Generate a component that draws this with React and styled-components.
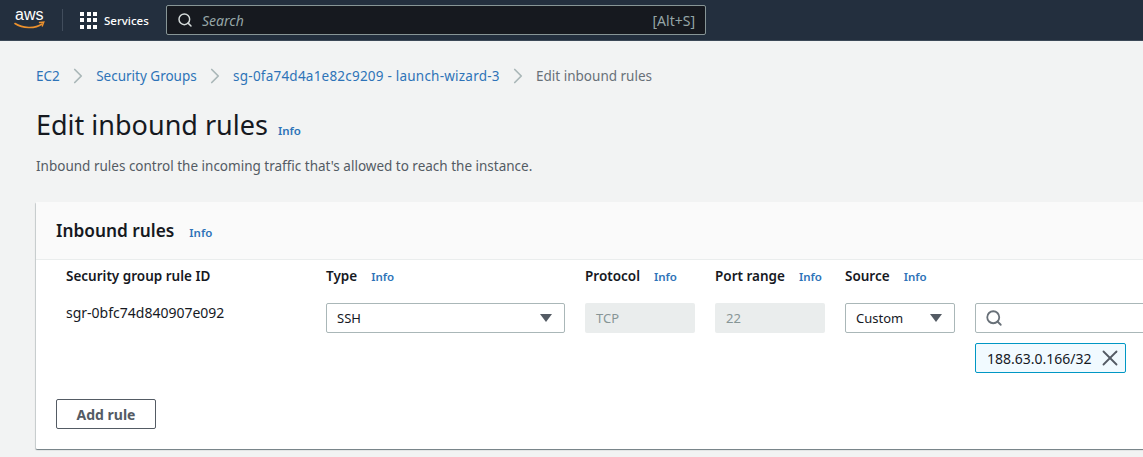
import React from "react";
import styled, { createGlobalStyle } from "styled-components";
import { Search, X, ChevronRight } from "lucide-react";

const GlobalStyle = createGlobalStyle`
  html, body {
    margin: 0;
    height: 100%;
    overflow: hidden;
    background: #f2f3f3;
    font-family: "Noto Sans", "Open Sans", sans-serif;
    font-size: 14px;
    color: #16191f;
  }
  * { box-sizing: border-box; }
`;

const Nav = styled.header`
  display: flex;
  align-items: center;
  height: 41px;
  padding-left: 14px;
  background: #232f3e;
  border-bottom: 1px solid #3c4857;
`;

const Logo = styled.svg`
  width: 32px;
  height: 30px;
  flex: none;
`;

const LogoText = styled.text`
  font-family: "Liberation Sans", sans-serif;
  font-size: 16px;
  fill: #fff;
`;

const NavDivider = styled.span`
  width: 1px;
  height: 22px;
  margin: 0 17px 0 16px;
  background: #414d5c;
`;

const ServicesButton = styled.div`
  display: flex;
  align-items: center;
  gap: 7px;
  width: 70px;
  margin-right: 16px;
  font-size: 11.5px;
  font-weight: 500;
  white-space: nowrap;
  color: #fff;
`;

const Waffle = styled.div`
  display: grid;
  grid-template-columns: repeat(3, 4px);
  grid-auto-rows: 4px;
  gap: 2.5px;
  flex: none;
`;

const WaffleDot = styled.span`
  background: #fff;
`;

const SearchBox = styled.div`
  display: flex;
  align-items: center;
  flex: none;
  width: 540px;
  height: 30px;
  padding: 0 10px;
  background: #16191f;
  border: 1px solid #879596;
  border-radius: 2px;
  color: #d5dbdb;
`;

const SearchPlaceholder = styled.span`
  flex: 1;
  margin-left: 9px;
  font-size: 14px;
  font-style: italic;
  color: #95a5a6;
`;

const Shortcut = styled.span`
  font-size: 14px;
  color: #95a5a6;
`;

const Page = styled.main`
  padding: 24px 0 0 36px;
`;

const Breadcrumbs = styled.nav`
  display: flex;
  align-items: center;
  height: 22px;
  font-size: 13.5px;
`;

const Crumb = styled.span`
  letter-spacing: ${(p) => (p.$id ? "0.22px" : "0")};
  color: ${(p) => (p.$current ? "#687078" : "#2e73b8")};
`;

const CrumbSep = styled(ChevronRight)`
  width: 26px;
  height: 26px;
  margin: 0 5.2px;
  color: #aab7b8;
`;

const TitleRow = styled.div`
  display: flex;
  align-items: baseline;
  margin-top: 19px;
`;

const Title = styled.h1`
  margin: 0;
  font-size: 27px;
  line-height: 38px;
  font-weight: 400;
  color: #16191f;
`;

const InfoLink = styled.a`
  margin-left: ${(p) => p.$gap || 10}px;
  font-size: 11.5px;
  font-weight: 600;
  color: #2e73b8;
`;

const Description = styled.p`
  margin: 13px 0 0;
  font-size: 13.5px;
  line-height: 18px;
  color: #545b64;
`;

const Card = styled.section`
  width: 1200px;
  height: 247px;
  margin-top: 27px;
  background: #fff;
  border-radius: 1px;
  box-shadow: 0 1px 1px 0 rgba(0, 28, 36, 0.4), 1px 1px 1px 0 rgba(0, 28, 36, 0.1),
    -1px 1px 1px 0 rgba(0, 28, 36, 0.15);
`;

const CardHeader = styled.div`
  display: flex;
  align-items: baseline;
  height: 58px;
  padding: 15px 20px 0;
  background: #fafafa;
  border-bottom: 1px solid #eaeded;
`;

const CardTitle = styled.h2`
  margin: 0;
  font-size: 17.3px;
  line-height: 28px;
  font-weight: 600;
  color: #16191f;
`;

const RulesGrid = styled.div`
  display: grid;
  grid-template-columns: 260px 259px 130px 130px 130px 1fr;
  padding: 6px 0 0 30px;
`;

const HeaderCell = styled.div`
  height: 21px;
  font-size: 13.5px;
  font-weight: 600;
  line-height: 20px;
  white-space: nowrap;
`;

const RuleCell = styled.div`
  margin-top: 16px;
  font-size: 13px;
`;

const RuleId = styled.div`
  font-size: 14px;
  line-height: 20px;
  color: #16191f;
`;

const Select = styled.div`
  display: flex;
  align-items: center;
  justify-content: space-between;
  width: ${(p) => p.$width}px;
  height: 30px;
  padding: 0 12px 0 10px;
  background: #fff;
  border: 1px solid #aab7b8;
  border-radius: 2px;
  color: #16191f;
`;

const Caret = styled.span`
  width: 0;
  height: 0;
  border-left: 6px solid transparent;
  border-right: 6px solid transparent;
  border-top: 8px solid #545b64;
`;

const ReadOnly = styled.div`
  display: flex;
  align-items: center;
  width: 110px;
  height: 30px;
  padding-left: 11px;
  background: #eaeded;
  border-radius: 2px;
  color: #879596;
`;

const SourceInput = styled.div`
  display: flex;
  align-items: center;
  width: 300px;
  height: 30px;
  padding-left: 9px;
  background: #fff;
  border: 1px solid #aab7b8;
  border-radius: 2px;
  color: #687078;
`;

const Token = styled.div`
  display: flex;
  align-items: center;
  justify-content: space-between;
  width: 151px;
  height: 30px;
  margin-top: 10px;
  padding: 0 2px 0 11px;
  font-size: 14px;
  background: #f1faff;
  border: 1px solid #0097c4;
  border-radius: 2px;
  color: #16191f;
`;

const TokenClose = styled(X)`
  width: 26px;
  height: 26px;
  flex: none;
  color: #545b64;
`;

const AddRule = styled.button`
  display: block;
  width: 100px;
  height: 30px;
  margin: 26px 0 0 20px;
  background: #fff;
  border: 1px solid #545b64;
  border-radius: 2px;
  font-family: inherit;
  font-size: 14px;
  font-weight: 700;
  color: #545b64;
`;

const columns = [
  { label: "Security group rule ID" },
  { label: "Type", info: true },
  { label: "Protocol", info: true },
  { label: "Port range", info: true },
  { label: "Source", info: true },
  { label: "" },
];

const crumbs = ["EC2", "Security Groups", "sg-0fa74d4a1e82c9209 - launch-wizard-3"];

export default function App() {
  return (
    <>
      <GlobalStyle />
      <Nav>
        <Logo viewBox="0 -4 32 30">
          <LogoText x="1" y="11">aws</LogoText>
          <path d="M1 14.5c7.5 5 20 5.5 27 .5" fill="none" stroke="#ec912d" strokeWidth="1.6" strokeLinecap="round" />
          <path d="M25.5 13.5l4.3-.4-1.5 4" fill="none" stroke="#ec912d" strokeWidth="1.4" strokeLinecap="round" />
        </Logo>
        <NavDivider />
        <ServicesButton>
          <Waffle>
            {Array.from({ length: 9 }, (_, i) => (
              <WaffleDot key={i} />
            ))}
          </Waffle>
          Services
        </ServicesButton>
        <SearchBox>
          <Search size={16} strokeWidth={2.2} />
          <SearchPlaceholder>Search</SearchPlaceholder>
          <Shortcut>[Alt+S]</Shortcut>
        </SearchBox>
      </Nav>
      <Page>
        <Breadcrumbs>
          {crumbs.map((c, i) => (
            <React.Fragment key={c}>
              <Crumb $id={i === 2}>{c}</Crumb>
              <CrumbSep strokeWidth={1.6} />
            </React.Fragment>
          ))}
          <Crumb $current>Edit inbound rules</Crumb>
        </Breadcrumbs>
        <TitleRow>
          <Title>Edit inbound rules</Title>
          <InfoLink>Info</InfoLink>
        </TitleRow>
        <Description>Inbound rules control the incoming traffic that's allowed to reach the instance.</Description>
        <Card>
          <CardHeader>
            <CardTitle>Inbound rules</CardTitle>
            <InfoLink $gap={15}>Info</InfoLink>
          </CardHeader>
          <RulesGrid>
            {columns.map((col) => (
              <HeaderCell key={col.label}>
                {col.label}
                {col.info && <InfoLink $gap={14}>Info</InfoLink>}
              </HeaderCell>
            ))}
            <RuleCell>
              <RuleId>sgr-0bfc74d840907e092</RuleId>
            </RuleCell>
            <RuleCell>
              <Select $width={239}>
                SSH
                <Caret />
              </Select>
            </RuleCell>
            <RuleCell>
              <ReadOnly>TCP</ReadOnly>
            </RuleCell>
            <RuleCell>
              <ReadOnly>22</ReadOnly>
            </RuleCell>
            <RuleCell>
              <Select $width={110}>
                Custom
                <Caret />
              </Select>
            </RuleCell>
            <RuleCell>
              <SourceInput>
                <Search size={18} strokeWidth={2.4} />
              </SourceInput>
              <Token>
                188.63.0.166/32
                <TokenClose strokeWidth={1.7} />
              </Token>
            </RuleCell>
          </RulesGrid>
          <AddRule>Add rule</AddRule>
        </Card>
      </Page>
    </>
  );
}
